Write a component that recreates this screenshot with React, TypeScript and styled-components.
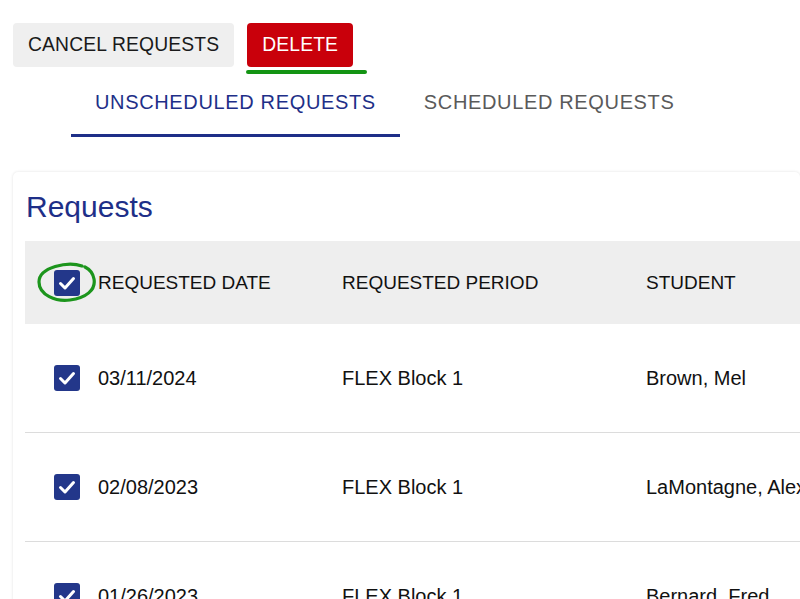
import React from "react";
import styled, { createGlobalStyle } from "styled-components";

const GlobalStyle = createGlobalStyle`
  html, body {
    margin: 0;
    padding: 0;
    background: #ffffff;
    font-family: "Liberation Sans", Arial, Helvetica, sans-serif;
    overflow: hidden;
  }
`;

const Page = styled.div`
  width: 800px;
  height: 599px;
  overflow: hidden;
  position: relative;
`;

const Toolbar = styled.div`
  display: flex;
  gap: 13px;
  padding: 23px 0 0 13px;
`;

const ActionButton = styled.button<{ danger?: boolean }>`
  position: relative;
  height: 44px;
  padding: 0 15px;
  border: none;
  border-radius: 4px;
  font-family: inherit;
  font-size: 19.3px;
  letter-spacing: 0.15px;
  background: ${(p) => (p.danger ? "#c9000b" : "#efefef")};
  color: ${(p) => (p.danger ? "#ffffff" : "#1a1a1a")};
  cursor: pointer;
`;

const Underline = styled.span`
  position: absolute;
  left: -1px;
  top: 47px;
  width: 121px;
  height: 4px;
  border-radius: 2px;
  background: #139413;
  filter: blur(0.4px);
`;

const TabBar = styled.div`
  display: flex;
  padding-left: 71px;
  height: 70px;
`;

const Tab = styled.div<{ active?: boolean }>`
  padding: 3px 24px 0;
  display: flex;
  align-items: center;
  font-size: 20px;
  letter-spacing: 0.65px;
  color: ${(p) => (p.active ? "#1e2f88" : "#5a5a5a")};
  border-bottom: 3px solid ${(p) => (p.active ? "#1e2f88" : "transparent")};
`;

const Card = styled.div`
  margin: 35px 0 0 13px;
  padding: 17px 0 0 12px;
  border-radius: 5px;
  background: #ffffff;
  box-shadow: 0 0 3px rgba(0, 0, 0, 0.12);
`;

const CardTitle = styled.h2`
  margin: 0 0 16px 1px;
  font-weight: 400;
  font-size: 30px;
  line-height: 36px;
  color: #1e2f88;
`;

const Row = styled.div<{ head?: boolean }>`
  display: grid;
  grid-template-columns: 317px 304px 1fr;
  align-items: center;
  height: ${(p) => (p.head ? "83px" : "108px")};
  background: ${(p) => (p.head ? "#eeeeee" : "#ffffff")};
  border-bottom: ${(p) => (p.head ? "none" : "1px solid #dcdcdc")};
  font-size: ${(p) => (p.head ? "19px" : "20px")};
  color: #111111;
  white-space: nowrap;
`;

const Cell = styled.div`
  overflow: hidden;
`;

const SelectCell = styled.div<{ head?: boolean }>`
  display: flex;
  align-items: center;
  gap: 18px;
  padding-left: 29px;
  position: relative;
`;

const Box = styled.span`
  position: relative;
  width: 26px;
  height: 26px;
  border-radius: 3px;
  background: #23378a;
  display: inline-flex;
  align-items: center;
  justify-content: center;
  flex-shrink: 0;
`;

const Ring = styled.svg`
  position: absolute;
  left: 11px;
  top: -9px;
  pointer-events: none;
`;

function Check() {
  return (
    <Box>
      <svg width="26" height="26" viewBox="0 0 26 26">
        <path
          d="M6.5 13.5 L11 18 L19.5 8.5"
          fill="none"
          stroke="#ffffff"
          strokeWidth="3"
          strokeLinecap="round"
          strokeLinejoin="round"
        />
      </svg>
    </Box>
  );
}

const rows = [
  { date: "03/11/2024", period: "FLEX Block 1", student: "Brown, Mel" },
  { date: "02/08/2023", period: "FLEX Block 1", student: "LaMontagne, Alex" },
  { date: "01/26/2023", period: "FLEX Block 1", student: "Bernard, Fred" },
];

export default function App() {
  return (
    <Page>
      <GlobalStyle />
      <Toolbar>
        <ActionButton>CANCEL REQUESTS</ActionButton>
        <ActionButton danger>
          DELETE
          <Underline />
        </ActionButton>
      </Toolbar>
      <TabBar>
        <Tab active>UNSCHEDULED REQUESTS</Tab>
        <Tab>SCHEDULED REQUESTS</Tab>
      </TabBar>
      <Card>
        <CardTitle>Requests</CardTitle>
        <Row head>
          <SelectCell head>
            <Ring width="62" height="44" viewBox="0 0 62 44">
              <path
                d="M46 5 C32 0 3 6 3 21 C3 34 20 41 34 39 C50 37 60 29 58 18 C57 12 53 8 49 6"
                fill="none"
                stroke="#1c951c"
                strokeWidth="3.2"
                strokeLinecap="round"
              />
            </Ring>
            <Check />
            <span>REQUESTED DATE</span>
          </SelectCell>
          <Cell>REQUESTED PERIOD</Cell>
          <Cell>STUDENT</Cell>
        </Row>
        {rows.map((r) => (
          <Row key={r.date}>
            <SelectCell>
              <Check />
              <span>{r.date}</span>
            </SelectCell>
            <Cell>{r.period}</Cell>
            <Cell>{r.student}</Cell>
          </Row>
        ))}
      </Card>
    </Page>
  );
}
